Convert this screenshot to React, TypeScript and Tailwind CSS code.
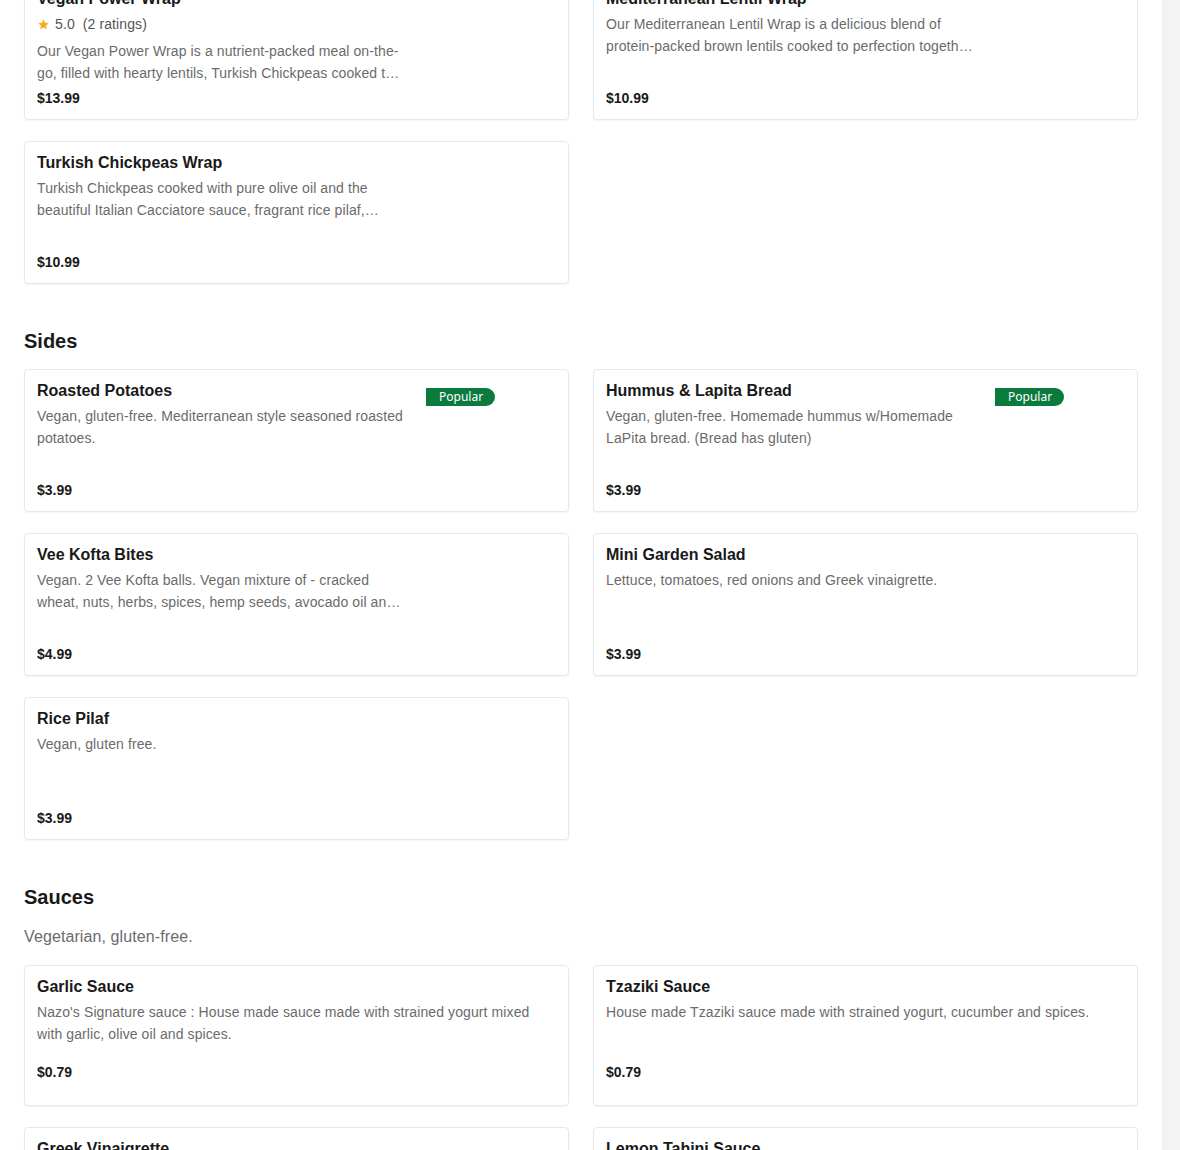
import React from 'react';

type Item = {
  name: string;
  desc: string;
  price: string;
  popular?: boolean;
  rating?: { score: string; count: number };
};

const WRAPS: Item[] = [
  {
    name: 'Vegan Power Wrap',
    desc: 'Our Vegan Power Wrap is a nutrient-packed meal on-the-go, filled with hearty lentils, Turkish Chickpeas cooked to perfection with pure olive oil and fresh vegetables.',
    price: '$13.99',
    rating: { score: '5.0', count: 2 },
  },
  {
    name: 'Mediterranean Lentil Wrap',
    desc: 'Our Mediterranean Lentil Wrap is a delicious blend of protein-packed brown lentils cooked to perfection together with fresh herbs and spices.',
    price: '$10.99',
  },
  {
    name: 'Turkish Chickpeas Wrap',
    desc: 'Turkish Chickpeas cooked with pure olive oil and the beautiful Italian Cacciatore sauce, fragrant rice pilaf, lettuce and tomatoes.',
    price: '$10.99',
  },
];

const SIDES: Item[] = [
  {
    name: 'Roasted Potatoes',
    desc: 'Vegan, gluten-free. Mediterranean style seasoned roasted potatoes.',
    price: '$3.99',
    popular: true,
  },
  {
    name: 'Hummus & Lapita Bread',
    desc: 'Vegan, gluten-free. Homemade hummus w/Homemade LaPita bread. (Bread has gluten)',
    price: '$3.99',
    popular: true,
  },
  {
    name: 'Vee Kofta Bites',
    desc: 'Vegan. 2 Vee Kofta balls. Vegan mixture of - cracked wheat, nuts, herbs, spices, hemp seeds, avocado oil and tomato paste.',
    price: '$4.99',
  },
  {
    name: 'Mini Garden Salad',
    desc: 'Lettuce, tomatoes, red onions and Greek vinaigrette.',
    price: '$3.99',
  },
  {
    name: 'Rice Pilaf',
    desc: 'Vegan, gluten free.',
    price: '$3.99',
  },
];

const SAUCES: Item[] = [
  {
    name: 'Garlic Sauce',
    desc: "Nazo's Signature sauce : House made sauce made with strained yogurt mixed with garlic, olive oil and spices.",
    price: '$0.79',
  },
  {
    name: 'Tzaziki Sauce',
    desc: 'House made Tzaziki sauce made with strained yogurt, cucumber and spices.',
    price: '$0.79',
  },
  { name: 'Greek Vinaigrette', desc: 'House made Greek vinaigrette.', price: '$0.79' },
  { name: 'Lemon Tahini Sauce', desc: 'House made lemon tahini sauce.', price: '$0.79' },
];

function Star() {
  return (
    <svg width="13" height="13" viewBox="0 0 24 24" className="mr-[5px]">
      <path
        d="M12 2.5l2.9 6.3 6.9.7-5.2 4.6 1.5 6.8L12 17.4l-6.1 3.5 1.5-6.8-5.2-4.6 6.9-.7z"
        fill="#f2b01e"
      />
    </svg>
  );
}

function MenuCard({ item, wide }: { item: Item; wide?: boolean }) {
  return (
    <div
      className={`flex flex-col rounded-[4px] border border-[#e8e8e8] bg-white px-3 pt-[11px] shadow-[0_1px_2px_rgba(0,0,0,0.05)] ${
        wide ? 'h-[141px] pb-[23px]' : 'h-[143px] pb-[11px]'
      }`}
    >
      <div className="flex">
        <div className={wide ? 'flex-1' : 'w-[370px]'}>
          <div className="text-[16px] font-bold leading-5 text-[#191919]">{item.name}</div>
          {item.rating && (
            <div className="mt-[5px] flex items-center text-[14px] leading-5 tracking-[0.1px] text-[#555]">
              <Star />
              <span>{item.rating.score}</span>
              <span className="ml-2">({item.rating.count} ratings)</span>
            </div>
          )}
          <p
            className={`line-clamp-2 text-[14px] leading-[22px] tracking-[0.1px] text-[#6b6b6b] ${
              item.rating ? 'mt-[6px]' : 'mt-[4px]'
            } ${wide ? 'min-h-[44px]' : ''}`}
          >
            {item.desc}
          </p>
        </div>
        {item.popular && (
          <div className="ml-[19px] mt-[7px] h-[18px]">
            <span
              className="flex h-[18px] items-center rounded-r-full bg-[#0b7a3d] pl-[13px] pr-[12px] text-[12px] leading-none text-white"
              style={{ fontFamily: '"Noto Sans", sans-serif' }}
            >
              Popular
            </span>
          </div>
        )}
      </div>
      <div
        className={`text-[14px] font-bold leading-5 text-[#191919] ${
          wide ? 'mt-[17px]' : 'mt-auto'
        }`}
      >
        {item.price}
      </div>
    </div>
  );
}

function Section({
  title,
  subtitle,
  items,
  wide,
}: {
  title: string;
  subtitle?: string;
  items: Item[];
  wide?: boolean;
}) {
  return (
    <section className="mt-[43px]">
      <h2 className="text-[20px] font-bold leading-7 text-[#191919]">{title}</h2>
      {subtitle && (
        <p className="mt-[14px] text-[16px] leading-6 tracking-[0.1px] text-[#6b6b6b]">{subtitle}</p>
      )}
      <div
        className={`grid grid-cols-2 gap-x-6 gap-y-[21px] ${
          subtitle ? 'mt-[16px]' : 'mt-[14px]'
        }`}
      >
        {items.map((item) => (
          <MenuCard key={item.name} item={item} wide={wide} />
        ))}
      </div>
    </section>
  );
}

export default function App() {
  return (
    <div
      className="flex h-[1150px] w-full overflow-hidden bg-white"
      style={{ fontFamily: '"Liberation Sans", Arial, sans-serif' }}
    >
      <main className="flex-1 px-6">
        <div className="-mt-[23px] grid grid-cols-2 gap-x-6 gap-y-[21px]">
          {WRAPS.map((item) => (
            <MenuCard key={item.name} item={item} />
          ))}
        </div>
        <Section title="Sides" items={SIDES} />
        <Section title="Sauces" subtitle="Vegetarian, gluten-free." items={SAUCES} wide />
      </main>
      <aside className="w-[18px] shrink-0 border-l border-[#ececec] bg-[#f3f3f3]" />
    </div>
  );
}
